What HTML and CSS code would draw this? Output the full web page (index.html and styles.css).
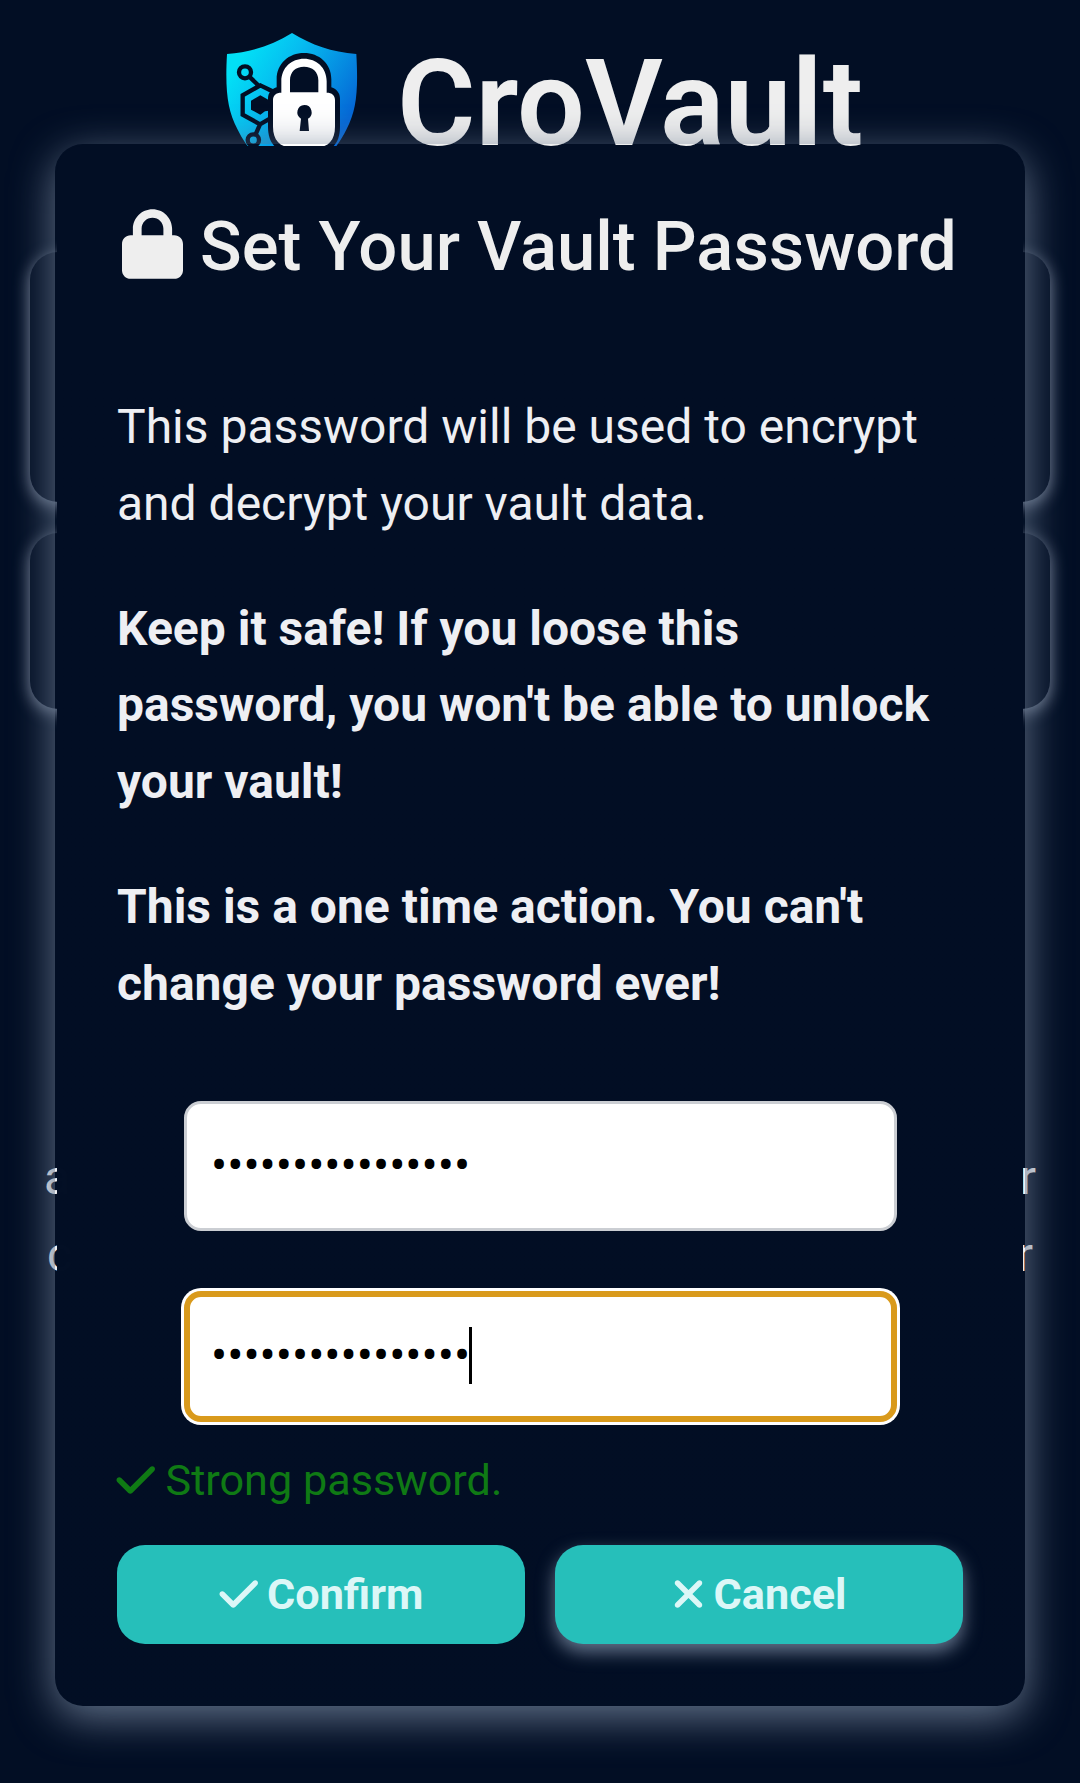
FILE: index.html
```html
<!DOCTYPE html>
<html lang="en">
<head>
<meta charset="utf-8">
<title>CroVault</title>
<link rel="stylesheet" href="styles.css">
</head>
<body>
<main class="page">
  <header class="brand">
    <svg class="brand-logo" viewBox="78 66 396 450" aria-hidden="true">
      <defs>
        <linearGradient id="shield" gradientUnits="userSpaceOnUse" x1="130" y1="130" x2="440" y2="330">
          <stop offset="0" stop-color="#02e0f6"/>
          <stop offset="0.35" stop-color="#06bdf0"/>
          <stop offset="1" stop-color="#0568d6"/>
        </linearGradient>
      </defs>
      <path fill="url(#shield)" d="M276 69C335 105 395 126 469 132C475 240 470 300 440 357C405 430 345 485 276 510C207 485 147 430 112 357C82 300 75 240 81 132C155 126 217 105 276 69Z"/>
      <g fill="none" stroke="#020e24" stroke-width="13">
        <circle cx="135" cy="187" r="18"/>
        <path d="M148 200L178 229M222 246L181 226L128 256V314L180 343L215 323M180 343L167 373"/>
        <circle cx="160" cy="390" r="17"/>
      </g>
      <path fill="#020e24" d="M153 272L181 256L206 270V302L195 304L181 314L153 299Z"/>
      <path fill="#020e24" d="M230 232V208C230 160 267 129 312 129S394 160 394 208V232C411 238 420 250 420 266V350C420 405 390 425 355 425H268C230 425 204 400 204 350V266C204 250 213 238 230 232Z"/>
      <path fill="#fff" fill-rule="evenodd" d="M244 248V214C244 172 275 146 312 146S380 172 380 214V248C396 248 405 256 405 270V350C405 390 385 412 350 412H275C240 412 219 390 219 350V270C219 256 228 248 244 248ZM270 247H355V211C355 185 337 170 312 170S270 185 270 211Z"/>
      <path fill="#020e24" d="M313 285A22 22 0 0 1 324 326L327 363H299L303 326A22 22 0 0 1 313 285Z"/>
    </svg>
    <h1 class="brand-name">CroVault</h1>
  </header>
  <section class="card card-large"></section>
  <section class="card card-small"></section>
  <div class="notes">
    <p class="note"><span>a</span><span>r</span></p>
    <p class="note note-inner"><span>c</span><span>r</span></p>
  </div>
</main>

<div class="overlay">
  <form class="modal">
    <h2 class="modal-title">
      <svg class="icon-lock" viewBox="0 0 448 512" aria-hidden="true"><path d="M144 144v48H304V144c0-44.2-35.8-80-80-80s-80 35.8-80 80zM80 192V144C80 64.5 144.5 0 224 0s144 64.5 144 144v48h16c35.3 0 64 28.7 64 64V448c0 35.3-28.7 64-64 64H64c-35.3 0-64-28.7-64-64V256c0-35.3 28.7-64 64-64H80z"/></svg>
      <span>Set Your Vault Password</span>
    </h2>
    <div class="modal-text">
      <p>This password will be used to encrypt and decrypt your vault data.</p>
      <p><strong>Keep it safe! If you loose this password, you won't be able to unlock your vault!</strong></p>
      <p><strong>This is a one time action. You can't change your password ever!</strong></p>
    </div>
    <div class="fields">
      <div class="field"><input class="input" type="password" value="abcdefghijklmnop"></div>
      <div class="field"><input class="input input-active" type="password" value="abcdefghijklmnop"><span class="caret"></span></div>
    </div>
    <p class="status">
      <svg class="icon-check" viewBox="0 0 448 512" aria-hidden="true"><path d="M438.6 105.4c12.5 12.5 12.5 32.8 0 45.3l-256 256c-12.5 12.5-32.8 12.5-45.3 0l-128-128c-12.5-12.5-12.5-32.8 0-45.3s32.8-12.5 45.3 0L160 338.7 393.4 105.4c12.5-12.5 32.8-12.5 45.3 0z"/></svg>
      <span>Strong password.</span>
    </p>
    <div class="actions">
      <button class="button" type="button">
        <svg class="icon-check" viewBox="0 0 448 512" aria-hidden="true"><path d="M438.6 105.4c12.5 12.5 12.5 32.8 0 45.3l-256 256c-12.5 12.5-32.8 12.5-45.3 0l-128-128c-12.5-12.5-12.5-32.8 0-45.3s32.8-12.5 45.3 0L160 338.7 393.4 105.4c12.5-12.5 32.8-12.5 45.3 0z"/></svg>
        <span>Confirm</span>
      </button>
      <button class="button button-raised" type="button">
        <svg class="icon-x" viewBox="0 0 384 512" aria-hidden="true"><path d="M342.6 150.6c12.5-12.5 12.5-32.8 0-45.3s-32.8-12.5-45.3 0L192 210.7 86.6 105.4c-12.5-12.5-32.8-12.5-45.3 0s-12.5 32.8 0 45.3L146.7 256 41.4 361.4c-12.5 12.5-12.5 32.8 0 45.3s32.8 12.5 45.3 0L192 301.3 297.4 406.6c12.5 12.5 32.8 12.5 45.3 0s12.5-32.8 0-45.3L237.3 256 342.6 150.6z"/></svg>
        <span>Cancel</span>
      </button>
    </div>
  </form>
</div>
</body>
</html>
```
FILE: styles.css
```css
* {
  box-sizing: border-box;
}

body {
  margin: 0;
  height: 1783px;
  overflow: hidden;
  position: relative;
  background: #020e24;
  color: #eeeff3;
  font-family: Roboto, "Liberation Sans", sans-serif;
  font-size: 48px;
  line-height: 1.6;
}

h1,
h2,
p {
  margin: 0;
}

svg {
  display: block;
  flex: none;
  fill: currentColor;
}

.page {
  padding: 32px 30px 0;
}

.brand {
  display: flex;
  gap: 39px;
  height: 220px;
  padding-left: 196px;
}

.brand-logo {
  width: 132px;
  height: 150px;
}

.brand-name {
  color: #eee;
  font-size: 120px;
  font-weight: 600;
  line-height: 144px;
}

.card {
  border-radius: 28px;
  background: #020e24;
  box-shadow: 0 4px 16px #7b889e;
}

.card-large {
  height: 250px;
}

.card-small {
  height: 176px;
  margin-top: 31px;
}

.notes {
  padding: 431px 14px 0;
}

.note {
  display: flex;
  justify-content: space-between;
}

.note-inner {
  padding: 0 3px;
}

.overlay {
  position: absolute;
  inset: 0;
  display: flex;
  justify-content: center;
  align-items: flex-start;
  padding-top: 144px;
}

.modal {
  width: 970px;
  height: 1562px;
  padding: 60px;
  border: 2px solid transparent;
  border-radius: 28px;
  background: linear-gradient(#020e24, #020e24fe) padding-box;
  box-shadow: 0 11px 43px #64748b;
}

.modal-title {
  display: flex;
  align-items: flex-start;
  gap: 17px;
  padding-left: 5px;
  color: #eee;
  font-size: 68.8px;
  font-weight: 500;
  line-height: 81px;
  height: 81px;
  white-space: nowrap;
}

.icon-lock {
  width: 61px;
  height: 70px;
  margin-top: 3px;
}

.modal-text {
  display: flex;
  flex-direction: column;
  gap: 48px;
  margin-top: 102px;
}

.fields {
  display: flex;
  flex-direction: column;
  gap: 60px;
  margin-top: 78px;
  padding: 0 66px 0 67px;
}

.field {
  position: relative;
  display: flex;
}

.input {
  width: 713px;
  height: 130px;
  padding: 0 24px;
  border: 3px solid #cbced3;
  border-radius: 17px;
  outline: none;
  background: #fff;
  color: #000;
  font: 48px Roboto, sans-serif;
}

.input-active {
  height: 131px;
  padding: 0 21px 1px;
  border: 6px solid #d99a1c;
  box-shadow: 0 0 0 3px #fff;
}

.caret {
  position: absolute;
  left: 285px;
  top: 36px;
  width: 3px;
  height: 57px;
  background: #000;
}

.status {
  display: flex;
  align-items: center;
  gap: 10px;
  margin: 24px 0 0 -1px;
  color: #0f7a14;
  font-size: 43.2px;
}

.icon-check {
  width: 39.5px;
  height: 44px;
}

.icon-x {
  width: 33px;
  height: 44px;
}

.actions {
  display: grid;
  grid-template-columns: 1fr 1fr;
  gap: 30px;
  margin-top: 30px;
}

.button {
  display: flex;
  align-items: center;
  justify-content: center;
  gap: 9px;
  height: 99px;
  padding: 0;
  border: 0;
  border-radius: 28px;
  background: #26bfba;
  color: #dcf7f7;
  font: 700 43.2px Roboto, sans-serif;
}

.button-raised {
  box-shadow: 0 8px 18px #64748b;
}
```
